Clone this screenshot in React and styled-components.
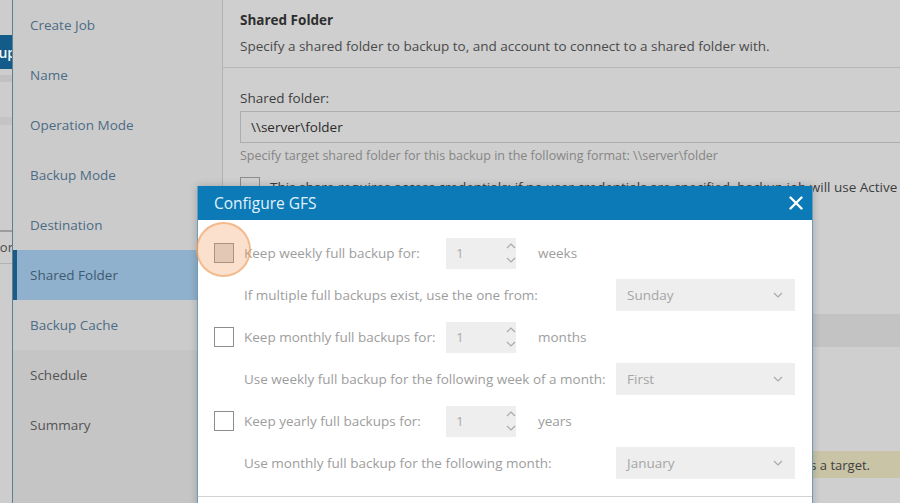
import React from 'react';
import styled, { createGlobalStyle } from 'styled-components';

const GlobalStyle = createGlobalStyle`
  html, body {
    margin: 0;
    height: 100%;
    overflow: hidden;
  }
  body {
    font-family: 'Open Sans', 'Liberation Sans', sans-serif;
    background: #cfcfcf;
  }
  #root {
    height: 100%;
  }
`;

const Screen = styled.div`
  position: relative;
  display: flex;
  width: 900px;
  height: 503px;
  overflow: hidden;
`;

/* sliver of the main console window that sits behind the wizard */
const BackWindow = styled.div`
  width: 12px;
  flex-shrink: 0;
  display: flex;
  flex-direction: column;
  background: #cdcdcd;
  overflow: hidden;
`;

const BackBar = styled.div`
  margin-top: 35px;
  height: 34px;
  background: #135b88;
  color: #f2f6f9;
  font-size: 14px;
  font-weight: 600;
  display: flex;
  align-items: center;
  justify-content: flex-end;
  white-space: nowrap;
  span {
    margin-right: -4px;
  }
`;

const BackBand = styled.div`
  margin-top: ${p => p.$top}px;
  height: ${p => p.$h}px;
  background: ${p => p.$color};
`;

const BackText = styled.div`
  height: 22px;
  margin-top: 4px;
  display: flex;
  align-items: center;
  justify-content: flex-end;
  color: #4a4a4a;
  font-size: 13px;
  white-space: nowrap;
  span {
    margin-right: -1px;
  }
`;

const Wizard = styled.div`
  flex: 1;
  display: flex;
  min-width: 0;
  border-left: 1px solid #5d7f96;
`;

const Nav = styled.nav`
  width: 209px;
  flex-shrink: 0;
  display: flex;
  flex-direction: column;
  background: #c5c5c5;
  border-right: 1px solid #b3b3b3;
`;

const NavItem = styled.div`
  height: 50px;
  display: flex;
  align-items: center;
  padding-left: ${p => (p.$active ? 13 : 17)}px;
  border-left: ${p => (p.$active ? '4px solid #1c5b84' : 'none')};
  background: ${p => (p.$active ? '#90b1cd' : p.$visited ? '#cbcbcb' : '#c5c5c5')};
  color: ${p => (p.$active ? '#3e5a72' : p.$visited ? '#4d6b86' : '#545454')};
  font-size: 13.5px;
`;

const Content = styled.main`
  flex: 1;
  min-width: 0;
  display: flex;
  flex-direction: column;
  background: #cfcfcf;
`;

const Header = styled.header`
  padding: 10px 17px 11px;
  border-bottom: 1px solid #b6b6b6;
`;

const Title = styled.div`
  font-size: 13.5px;
  font-weight: 700;
  line-height: 20px;
  color: #2e2e2e;
`;

const Subtitle = styled.div`
  margin-top: 6px;
  font-size: 13.5px;
  line-height: 20px;
  color: #4a4a4a;
`;

const Body = styled.div`
  padding: 20px 0 0 17px;
  display: flex;
  flex-direction: column;
`;

const FieldLabel = styled.div`
  font-size: 13.5px;
  line-height: 20px;
  color: #3d3d3d;
`;

const TextInput = styled.div`
  box-sizing: border-box;
  height: 32px;
  margin-top: 3px;
  margin-right: -10px;
  padding-left: 10px;
  display: flex;
  align-items: center;
  border: 1px solid #adadad;
  font-size: 13.5px;
  color: #2b2b2b;
`;

const Hint = styled.div`
  margin-top: 5px;
  font-size: 12.5px;
  line-height: 16px;
  color: #858585;
`;

const CredRow = styled.div`
  margin-top: 13px;
  display: flex;
  align-items: center;
  gap: 10px;
  font-size: 13.5px;
  color: #3d3d3d;
  white-space: nowrap;
`;

const PlainBox = styled.span`
  box-sizing: border-box;
  width: 20px;
  height: 20px;
  flex-shrink: 0;
  border: 1px solid #8c8c8c;
`;

const TableHead = styled.div`
  margin-top: 117px;
  margin-left: -17px;
  height: 33px;
  background: #c3c3c3;
`;

const Warning = styled.div`
  margin-top: 104px;
  margin-left: -17px;
  height: 27px;
  padding-right: 30px;
  display: flex;
  align-items: center;
  justify-content: flex-end;
  background: #c9c4a6;
  color: #3f3f3f;
  font-size: 13px;
  white-space: nowrap;
`;

/* GFS dialog on top of the wizard */
const Layer = styled.div`
  position: absolute;
  inset: 0;
  pointer-events: none;
`;

const Dialog = styled.div`
  position: absolute;
  left: 197px;
  top: 186px;
  width: 616px;
  bottom: -40px;
  box-sizing: border-box;
  display: flex;
  flex-direction: column;
  background: #ffffff;
  border: 1px solid #6a9cbc;
  border-top: none;
  box-shadow: 0 0 8px rgba(0, 0, 0, 0.2);
`;

const DialogHeader = styled.div`
  height: 34px;
  flex-shrink: 0;
  display: flex;
  align-items: center;
  justify-content: space-between;
  padding: 0 9px 0 16px;
  background: #0b7ab7;
`;

const DialogTitle = styled.div`
  font-size: 15.5px;
  color: #e2f2fb;
`;

const DialogBody = styled.div`
  padding: 12px 16px;
  border-bottom: 1px solid #d2d2d2;
  display: flex;
  flex-direction: column;
`;

const Row = styled.div`
  height: 42px;
  display: flex;
  align-items: center;
  padding-left: ${p => (p.$sub ? 30 : 0)}px;
`;

const CheckWrap = styled.span`
  position: relative;
  width: 20px;
  height: 20px;
  flex-shrink: 0;
  margin-right: 10px;
`;

const Check = styled.span`
  display: block;
  box-sizing: border-box;
  width: 20px;
  height: 20px;
  border: 1px solid #8d8d8d;
  background: ${p => (p.$pressed ? '#dcdcdc' : '#ffffff')};
`;

const ClickMark = styled.span`
  position: absolute;
  left: -18px;
  top: -21px;
  width: 55px;
  height: 55px;
  box-sizing: border-box;
  border-radius: 50%;
  background: rgba(244, 160, 100, 0.32);
  border: 2px solid rgba(236, 160, 100, 0.6);
`;

const OptionLabel = styled.span`
  width: ${p => p.$w}px;
  flex-shrink: 0;
  font-size: 13.5px;
  color: #9d9d9d;
  white-space: nowrap;
`;

const Spinner = styled.div`
  box-sizing: border-box;
  width: 70px;
  height: 31px;
  display: flex;
  align-items: center;
  justify-content: space-between;
  padding: 0 0 0 10px;
  background: #eeeeee;
  font-size: 13.5px;
  color: #ababab;
`;

const Arrows = styled.span`
  width: 10px;
  margin-right: 0;
  display: flex;
  flex-direction: column;
  gap: 8px;
`;

const Unit = styled.span`
  margin-left: 22px;
  font-size: 13.5px;
  color: #9d9d9d;
`;

const Select = styled.div`
  box-sizing: border-box;
  width: 179px;
  height: 32px;
  display: flex;
  align-items: center;
  justify-content: space-between;
  padding: 0 12px 0 11px;
  background: #eeeeee;
  font-size: 13.5px;
  color: #a5a5a5;
`;

const Chevron = ({ up }) => (
  <svg width="10" height="6" viewBox="0 0 10 6">
    <polyline
      points={up ? '1,5 5,1 9,5' : '1,1 5,5 9,1'}
      fill="none"
      stroke="#a9a9a9"
      strokeWidth="1.2"
    />
  </svg>
);

const CloseIcon = () => (
  <svg width="14" height="14" viewBox="0 0 14 14">
    <path d="M1.5 1.5 L12.5 12.5 M12.5 1.5 L1.5 12.5" stroke="#ffffff" strokeWidth="2.4" strokeLinecap="round" />
  </svg>
);

const steps = [
  { label: 'Create Job', visited: true },
  { label: 'Name', visited: true },
  { label: 'Operation Mode', visited: true },
  { label: 'Backup Mode', visited: true },
  { label: 'Destination', visited: true },
  { label: 'Shared Folder', visited: true, active: true },
  { label: 'Backup Cache', visited: true },
  { label: 'Schedule' },
  { label: 'Summary' },
];

const retention = [
  {
    keep: 'Keep weekly full backup for:',
    unit: 'weeks',
    pressed: true,
    pick: 'If multiple full backups exist, use the one from:',
    value: 'Sunday',
  },
  {
    keep: 'Keep monthly full backups for:',
    unit: 'months',
    pick: 'Use weekly full backup for the following week of a month:',
    value: 'First',
  },
  {
    keep: 'Keep yearly full backups for:',
    unit: 'years',
    pick: 'Use monthly full backup for the following month:',
    value: 'January',
  },
];

export default function App() {
  return (
    <Screen>
      <GlobalStyle />
      <BackWindow>
        <BackBar><span>Backup</span></BackBar>
        <BackBand $top={6} $h={7} $color="#c1c1c1" />
        <BackBand $top={35} $h={8} $color="#c4c4c4" />
        <BackBand $top={105} $h={2} $color="#9c9c9c" />
        <BackText><span>Monitor</span></BackText>
        <BackBand $top={5} $h={1} $color="#b3b3b3" />
      </BackWindow>

      <Wizard>
        <Nav>
          {steps.map(s => (
            <NavItem key={s.label} $active={s.active} $visited={s.visited}>
              {s.label}
            </NavItem>
          ))}
        </Nav>

        <Content>
          <Header>
            <Title>Shared Folder</Title>
            <Subtitle>
              Specify a shared folder to backup to, and account to connect to a shared folder with.
            </Subtitle>
          </Header>
          <Body>
            <FieldLabel>Shared folder:</FieldLabel>
            <TextInput>\\server\folder</TextInput>
            <Hint>Specify target shared folder for this backup in the following format: \\server\folder</Hint>
            <CredRow>
              <PlainBox />
              This share requires access credentials: if no user credentials are specified, backup job will use Active Directory computer account
            </CredRow>
            <TableHead />
            <Warning>
              The specified shared folder is already in use by another backup job as a target.
            </Warning>
          </Body>
        </Content>
      </Wizard>

      <Layer>
        <Dialog>
          <DialogHeader>
            <DialogTitle>Configure GFS</DialogTitle>
            <CloseIcon />
          </DialogHeader>
          <DialogBody>
            {retention.map(r => (
              <React.Fragment key={r.unit}>
                <Row>
                  <CheckWrap>
                    <Check $pressed={r.pressed} />
                    {r.pressed && <ClickMark />}
                  </CheckWrap>
                  <OptionLabel $w={202}>{r.keep}</OptionLabel>
                  <Spinner>
                    1
                    <Arrows>
                      <Chevron up />
                      <Chevron />
                    </Arrows>
                  </Spinner>
                  <Unit>{r.unit}</Unit>
                </Row>
                <Row $sub>
                  <OptionLabel $w={372}>{r.pick}</OptionLabel>
                  <Select>
                    {r.value}
                    <Chevron />
                  </Select>
                </Row>
              </React.Fragment>
            ))}
          </DialogBody>
        </Dialog>
      </Layer>
    </Screen>
  );
}
